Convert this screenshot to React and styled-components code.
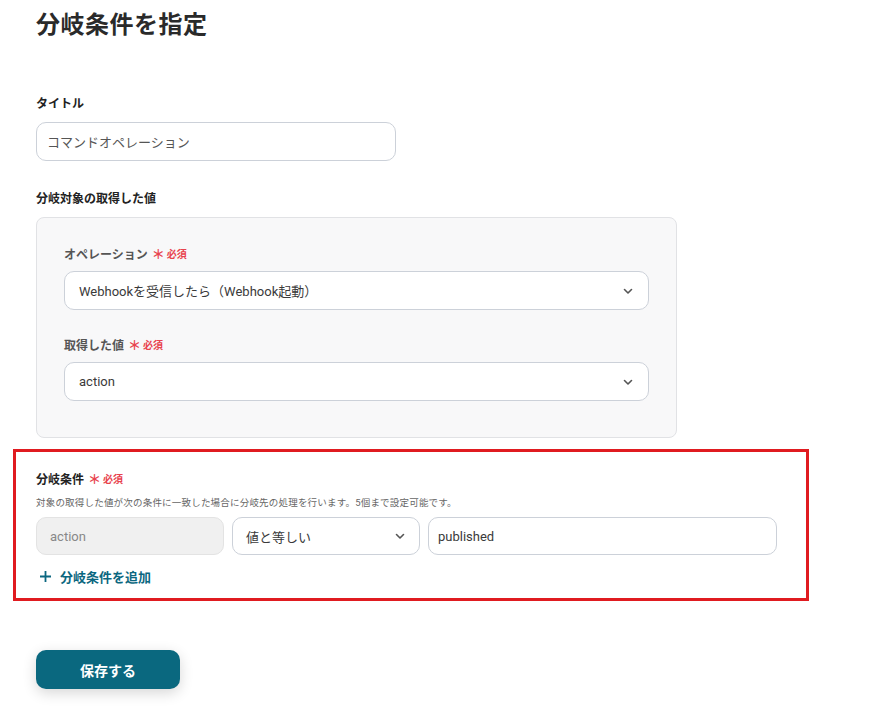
import React from 'react'
import styled, {createGlobalStyle} from 'styled-components'

const GlobalStyle = createGlobalStyle`
  body {
    margin: 0;
    background: #fff;
    font-family: Roboto, "Noto Sans CJK JP", sans-serif;
    color: #333;
  }
`

const Page = styled.div`
  width: 874px;
  height: 708px;
  overflow: hidden;
  padding: 0 36px;
  box-sizing: border-box;
`

const Heading = styled.h1`
  margin: 0;
  padding-top: 8px;
  font-size: 24px;
  line-height: 34px;
  font-weight: 700;
  color: #2a2a2a;
  letter-spacing: 0.5px;
`

const Field = styled.div`
  display: flex;
  flex-direction: column;
  margin-top: ${p => p.top || 0}px;
`

const Label = styled.div`
  display: flex;
  align-items: center;
  font-size: 12px;
  font-weight: 700;
  color: ${p => p.muted ? '#555' : '#222'};
  line-height: 16px;
  height: 16px;
  margin-bottom: ${p => p.gap ?? 10}px;
`

const Required = styled.span`
  color: #e8434e;
  font-size: 10px;
  font-weight: 700;
  margin-left: 4px;
  display: flex;
  align-items: center;

  &::before {
    content: "＊";
    font-size: 13px;
    margin-right: 2px;
  }
`

const TextBox = styled.div`
  box-sizing: border-box;
  width: ${p => p.width ? p.width + 'px' : '100%'};
  height: ${p => p.height || 39}px;
  border: 1px solid ${p => p.disabled ? '#e3e3e3' : '#ccd1d9'};
  border-radius: 10px;
  background: ${p => p.disabled ? '#f0f0f0' : '#fff'};
  padding: 0 ${p => p.pad || 10}px;
  display: flex;
  align-items: center;
  justify-content: space-between;
  font-size: 13px;
  color: ${p => p.disabled ? '#888' : '#3a3a3a'};
  flex: none;
`

const Panel = styled.div`
  box-sizing: border-box;
  width: 641px;
  background: #f8f8f9;
  border: 1px solid #e1e2e5;
  border-radius: 8px;
  padding: 29px 27px 36px;
  margin-top: 10px;
`

const Highlight = styled.div`
  margin: 11px 0 0 -23px;
  width: 796px;
  box-sizing: border-box;
  border: 3px solid #e01b20;
  padding: 20px 20px 12px;
`

const Hint = styled.div`
  font-size: 9.5px;
  color: #666;
  margin-top: -3px;
  margin-bottom: 8px;
  letter-spacing: 0.2px;
`

const Row = styled.div`
  display: flex;
  gap: 8px;
  align-items: center;
`

const AddLink = styled.div`
  display: flex;
  align-items: center;
  gap: 8px;
  margin-top: 12px;
  margin-left: 3px;
  color: #0b6780;
  font-size: 13px;
  font-weight: 700;
`

const SaveButton = styled.button`
  margin-top: 49px;
  width: 144px;
  height: 39px;
  border: none;
  border-radius: 10px;
  background: #0a687f;
  color: #fff;
  font-family: inherit;
  font-size: 14px;
  font-weight: 700;
  box-shadow: 0 4px 14px rgba(0, 0, 0, 0.16);
`

const Chevron = () => (
  <svg width="12" height="12" viewBox="0 0 12 12" fill="none">
    <path d="M2.5 4.5L6 8L9.5 4.5" stroke="#555" strokeWidth="1.6" strokeLinecap="round" strokeLinejoin="round"/>
  </svg>
)

const Plus = () => (
  <svg width="13" height="13" viewBox="0 0 13 13">
    <path d="M6.5 1v11M1 6.5h11" stroke="#0b6780" strokeWidth="1.8"/>
  </svg>
)

export default function App() {
  return (
    <Page>
      <GlobalStyle/>
      <Heading>分岐条件を指定</Heading>

      <Field top={54}>
        <Label>タイトル</Label>
        <TextBox width={360}>
          <span style={{color: '#555'}}>コマンドオペレーション</span>
        </TextBox>
      </Field>

      <Field top={30}>
        <Label gap={0}>分岐対象の取得した値</Label>
        <Panel>
          <Field>
            <Label muted gap={8}>オペレーション<Required>必須</Required></Label>
            <TextBox pad={14}>
              <span>Webhookを受信したら（Webhook起動）</span>
              <Chevron/>
            </TextBox>
          </Field>
          <Field top={28}>
            <Label muted gap={8}>取得した値<Required>必須</Required></Label>
            <TextBox pad={14}>
              <span>action</span>
              <Chevron/>
            </TextBox>
          </Field>
        </Panel>
      </Field>

      <Highlight>
        <Label>分岐条件<Required>必須</Required></Label>
        <Hint>対象の取得した値が次の条件に一致した場合に分岐先の処理を行います。5個まで設定可能です。</Hint>
        <Row>
          <TextBox disabled width={188} pad={13} height={38}>action</TextBox>
          <TextBox width={188} pad={13} height={38}>
            <span>値と等しい</span>
            <Chevron/>
          </TextBox>
          <TextBox width={349} pad={9} height={38}>published</TextBox>
        </Row>
        <AddLink><Plus/>分岐条件を追加</AddLink>
      </Highlight>

      <SaveButton>保存する</SaveButton>
    </Page>
  )
}
